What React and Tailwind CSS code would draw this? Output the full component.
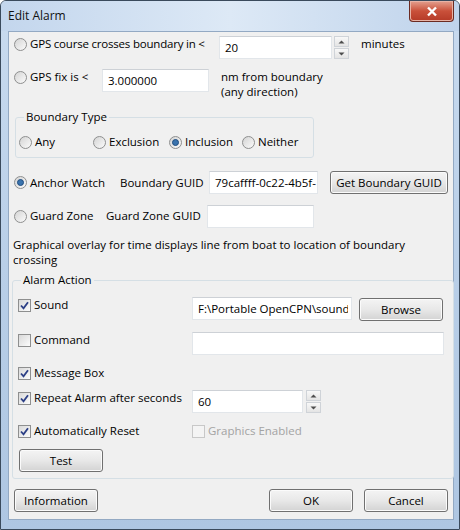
import React from 'react'

const Radio = ({ checked }) => (
  <span className="w-[13px] h-[13px] shrink-0 rounded-full border border-[#8e8f8f] bg-linear-to-br from-[#d4d4d4] to-[#fbfbfb] flex items-center justify-center">
    {checked && <span className="w-[7px] h-[7px] rounded-full bg-[#3a73ad] border border-[#1f4d80]" />}
  </span>
)

const Check = ({ checked, disabled }) => (
  <span
    className={`w-[13px] h-[13px] shrink-0 border flex items-center justify-center ${
      disabled ? 'border-[#c8c8c8] bg-[#f4f4f4]' : 'border-[#8e8f8f] bg-linear-to-br from-[#d9d9d9] to-[#fcfcfc]'
    }`}
  >
    {checked && (
      <svg width="11" height="11" viewBox="0 0 11 11">
        <path d="M2 5.5 L4.5 8.3 L9 2.2" fill="none" stroke="#2c3f86" strokeWidth="1.8" />
      </svg>
    )}
  </span>
)

const Btn = ({ w, children }) => (
  <div
    className={`${w} h-[23px] shrink-0 rounded-[3px] border border-[#707070] bg-linear-to-b from-[#f4f4f4] via-[#e8e8e8] to-[#d3d3d3] shadow-[inset_0_0_0_1px_#fbfbfb] flex items-center justify-center`}
  >
    {children}
  </div>
)

const Field = ({ w, children }) => (
  <div className={`${w} h-[23px] shrink-0 bg-white border border-[#e2e6ea] border-t-[#cdd1d6] pl-[5px] flex items-center overflow-hidden whitespace-nowrap`}>
    {children}
  </div>
)

const Spin = () => (
  <div className="w-[15px] h-[23px] shrink-0 flex flex-col gap-[1px]">
    {[0, 1].map((i) => (
      <div key={i} className="flex-1 border border-[#cfd3d8] bg-linear-to-b from-[#f8f8f8] to-[#e4e4e4] flex items-center justify-center">
        <svg width="7" height="4" viewBox="0 0 7 4">
          <path d={i === 0 ? 'M0.5 3.5 L3.5 0.5 L6.5 3.5 Z' : 'M0.5 0.5 L3.5 3.5 L6.5 0.5 Z'} fill="#4d4d4d" />
        </svg>
      </div>
    ))}
  </div>
)

const RadioLabel = ({ checked, children, w }) => (
  <div className={`${w} shrink-0 flex items-center gap-[3px] h-[16px]`}>
    <Radio checked={checked} />
    <span>{children}</span>
  </div>
)

const CheckLabel = ({ checked, children, w }) => (
  <div className={`${w} shrink-0 flex items-center gap-[3px] h-[16px]`}>
    <Check checked={checked} />
    <span>{children}</span>
  </div>
)

export default function App() {
  return (
    <div className="w-[460px] h-[530px] flex flex-col bg-linear-to-b from-[#c9dbef] via-[#b9cfe8] to-[#aec6e2] border border-[#3a4a5c] rounded-t-[6px] font-['Open_Sans',sans-serif] text-[11.5px] text-black leading-[16px] overflow-hidden">
      {/* title bar */}
      <div className="h-[30px] shrink-0 flex items-start justify-between pl-[7px] pr-[5px] bg-linear-to-r from-[#c3d6ed] via-[#dde9f6] to-[#bfd3eb]">
        <span className="mt-[7px] text-[12px] text-[#111]">Edit Alarm</span>
        <div className="w-[45px] h-[21px] rounded-b-[4px] border border-t-0 border-[#6b2b22] bg-linear-to-b from-[#e3a08f] via-[#c9503a] to-[#b53a27] flex items-center justify-center shadow-[inset_0_0_0_1px_#e7b3a6]">
          <svg width="12" height="11" viewBox="0 0 12 11">
            <path d="M2 1.5 L10 9.5 M10 1.5 L2 9.5" stroke="#ffffff" strokeWidth="2.4" />
          </svg>
        </div>
      </div>

      {/* client */}
      <div className="flex-1 ml-[7px] mr-[5px] mb-[9px] border border-[#93a9c3] bg-[#f0f0f0] pl-[5px] pr-[5px] pt-[4px] flex flex-col">
        {/* row 1 */}
        <div className="flex items-start h-[23px]">
          <RadioLabel w="w-[205px]">
            <span className="tracking-[-0.2px]">GPS course crosses boundary in &lt;</span>
          </RadioLabel>
          <Field w="w-[113px]">20</Field>
          <div className="ml-[2px]"><Spin /></div>
          <span className="ml-[12px]">minutes</span>
        </div>

        {/* row 2 */}
        <div className="flex items-start mt-[10px] h-[30px]">
          <RadioLabel w="w-[88px]">GPS fix is &lt;</RadioLabel>
          <Field w="w-[107px]">3.000000</Field>
          <div className="ml-[12px] leading-[15px]">
            nm from boundary
            <br />
            (any direction)
          </div>
        </div>

        {/* boundary type */}
        <fieldset className="mt-[10px] ml-[1px] w-[299px] border border-[#d5dfe5] rounded-[3px] pt-[9px] pb-[7px] pl-[3px]">
          <legend className="ml-[5px] px-[2px]">Boundary Type</legend>
          <div className="flex">
            <RadioLabel w="w-[74px]">Any</RadioLabel>
            <RadioLabel w="w-[76px]">Exclusion</RadioLabel>
            <RadioLabel w="w-[73px]" checked>Inclusion</RadioLabel>
            <RadioLabel w="w-[60px]">Neither</RadioLabel>
          </div>
        </fieldset>

        {/* anchor watch */}
        <div className="flex items-center mt-[13px] h-[23px]">
          <RadioLabel w="w-[106px]" checked>Anchor Watch</RadioLabel>
          <span className="w-[89px] shrink-0">Boundary GUID</span>
          <Field w="w-[109px]">79caffff-0c22-4b5f-</Field>
          <div className="ml-[12px]">
            <Btn w="w-[118px]">Get Boundary GUID</Btn>
          </div>
        </div>

        {/* guard zone */}
        <div className="flex items-center mt-[11px] h-[22px]">
          <RadioLabel w="w-[92px]">Guard Zone</RadioLabel>
          <span className="w-[101px] shrink-0">Guard Zone GUID</span>
          <Field w="w-[107px]"></Field>
        </div>

        <p className="mt-[10px] -ml-[1px] w-[430px] leading-[15px]">
          Graphical overlay for time displays line from boat to location of boundary crossing
        </p>

        {/* alarm action */}
        <fieldset className="mt-[5px] -ml-[2px] w-[442px] border border-[#d5dfe5] rounded-[3px] pt-[9px] pb-[6px] pl-[5px]">
          <legend className="ml-[3px] px-[2px]">Alarm Action</legend>

          <div className="flex items-start">
            <CheckLabel w="w-[174px]" checked>Sound</CheckLabel>
            <Field w="w-[160px]">
              <span className="block w-[150px] overflow-hidden">F:\Portable OpenCPN\sound:</span>
            </Field>
            <div className="ml-[7px] mt-[1px]">
              <Btn w="w-[84px]">Browse</Btn>
            </div>
          </div>

          <div className="flex items-start mt-[11px]">
            <CheckLabel w="w-[174px]">Command</CheckLabel>
            <Field w="w-[252px]"></Field>
          </div>

          <div className="flex mt-[10px]">
            <CheckLabel w="w-[174px]" checked>Message Box</CheckLabel>
          </div>

          <div className="flex items-start mt-[9px]">
            <CheckLabel w="w-[174px]" checked>Repeat Alarm after seconds</CheckLabel>
            <Field w="w-[111px]">60</Field>
            <div className="ml-[3px]"><Spin /></div>
          </div>

          <div className="flex mt-[10px]">
            <CheckLabel w="w-[174px]" checked>Automatically Reset</CheckLabel>
            <div className="flex items-center gap-[3px] h-[16px] text-[#a3a3a3]">
              <Check disabled />
              <span>Graphics Enabled</span>
            </div>
          </div>

          <div className="flex mt-[10px] ml-[1px]">
            <Btn w="w-[84px]">Test</Btn>
          </div>
        </fieldset>

        {/* bottom buttons */}
        <div className="flex items-center mt-[10px]">
          <Btn w="w-[84px]">Information</Btn>
          <div className="flex-1" />
          <Btn w="w-[84px]">OK</Btn>
          <div className="ml-[11px]">
            <Btn w="w-[84px]">Cancel</Btn>
          </div>
        </div>
      </div>
    </div>
  )
}
